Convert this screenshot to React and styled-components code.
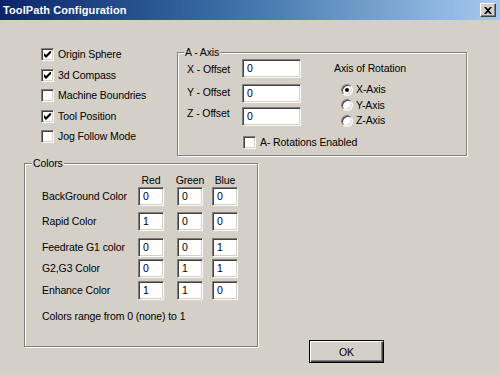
import React from "react";
import styled, { createGlobalStyle } from "styled-components";

const Global = createGlobalStyle`
  html, body { margin: 0; padding: 0; background: #D4D0C8; }
  body { font-family: "Liberation Sans", Arial, sans-serif; font-size: 10.5px; letter-spacing: -0.1px; color: #000; }
  * { box-sizing: border-box; }
`;

const Window = styled.div`
  width: 500px;
  height: 375px;
  background: #D4D0C8;
  display: flex;
  flex-direction: column;
  overflow: hidden;
`;

const TitleBar = styled.div`
  height: 20px;
  flex: none;
  display: flex;
  align-items: center;
  justify-content: space-between;
  padding: 0 4px 0 3px;
  background: linear-gradient(to right, #0A246A 0%, #3A6EA5 45%, #A6CAF0 100%);
`;

const Title = styled.span`
  color: #fff;
  font-weight: bold;
  font-size: 11px;
  letter-spacing: 0.1px;
  line-height: 13px;
`;

const CloseButton = styled.div`
  width: 16px;
  height: 14px;
  background: #D4D0C8;
  border-top: 1px solid #fff;
  border-left: 1px solid #fff;
  border-right: 1px solid #404040;
  border-bottom: 1px solid #404040;
  box-shadow: inset -1px -1px 0 #808080;
  display: flex;
  align-items: center;
  justify-content: center;
`;

const Content = styled.div`
  flex: 1;
  display: flex;
  flex-direction: column;
  padding: 28px 0 0 24px;
`;

const TopRow = styled.div`
  display: flex;
  align-items: flex-start;
`;

const Checklist = styled.div`
  width: 153px;
  padding-left: 17px;
  display: flex;
  flex-direction: column;
`;

const CheckRow = styled.label`
  display: flex;
  align-items: flex-start;
  height: ${(p) => p.$h || 20.5}px;
  gap: 4px;
  line-height: 13px;
  white-space: nowrap;
`;

const Box = styled.span`
  width: 13px;
  height: 13px;
  flex: none;
  background: #fff;
  border-top: 1px solid #808080;
  border-left: 1px solid #808080;
  border-right: 1px solid #fff;
  border-bottom: 1px solid #fff;
  box-shadow: inset 1px 1px 0 #404040, inset -1px -1px 0 #D4D0C8;
  display: flex;
  align-items: center;
  justify-content: center;
`;

const Group = styled.div`
  position: relative;
  width: ${(p) => p.$w}px;
  height: ${(p) => p.$h}px;
  margin-top: ${(p) => p.$mt || 0}px;
  border: 1px solid #808080;
  box-shadow: inset 1px 1px 0 #fff, 1px 1px 0 #fff;
  flex: none;
`;

const Caption = styled.span`
  position: absolute;
  top: -7px;
  left: ${(p) => p.$left}px;
  padding: 0 1px;
  background: #D4D0C8;
  line-height: 13px;
`;

const AxisBody = styled.div`
  display: flex;
  padding: 6px 0 0 9px;
`;

const Fields = styled.div`
  display: flex;
  flex-direction: column;
`;

const Field = styled.div`
  display: flex;
  align-items: center;
  margin-top: ${(p) => p.$mt || 0}px;
`;

const FieldLabel = styled.span`
  width: 55px;
  line-height: 13px;
  white-space: nowrap;
  position: relative;
  top: ${(p) => p.$dy || 0}px;
`;

const TextBox = styled.div`
  width: ${(p) => p.$w}px;
  height: 19px;
  flex: none;
  background: #fff;
  border-top: 1px solid #808080;
  border-left: 1px solid #808080;
  border-right: 1px solid #fff;
  border-bottom: 1px solid #fff;
  box-shadow: inset 1px 1px 0 #404040, inset -1px -1px 0 #D4D0C8;
  padding: 2px 0 0 4px;
  line-height: 13px;
`;

const Rotation = styled.div`
  margin-left: 33px;
  padding-top: 3px;
  display: flex;
  flex-direction: column;
`;

const RotationTitle = styled.div`
  line-height: 13px;
  white-space: nowrap;
  margin-bottom: 7px;
`;

const RadioRow = styled.div`
  display: flex;
  align-items: center;
  gap: 3px;
  padding-left: 7px;
  height: 15.5px;
  line-height: 13px;
`;

const Radio = styled.span`
  position: relative;
  width: 12px;
  height: 12px;
  border-radius: 50%;
  background: #fff;
  border-top: 1px solid #808080;
  border-left: 1px solid #808080;
  border-right: 1px solid #fff;
  border-bottom: 1px solid #fff;
  box-shadow: inset 1px 1px 0 #404040, inset -1px -1px 0 #D4D0C8;
  flex: none;
  &::after {
    content: "";
    display: ${(p) => (p.$on ? "block" : "none")};
    position: absolute;
    left: 3px;
    top: 3px;
    width: 4px;
    height: 4px;
    border-radius: 50%;
    background: #000;
  }
`;

const EnableRow = styled(CheckRow)`
  margin: 7px 0 0 65px;
`;

const BottomRow = styled.div`
  display: flex;
  align-items: flex-end;
  margin-top: 7px;
`;

const ColorsBody = styled.div`
  padding: 10px 0 0 17px;
  display: flex;
  flex-direction: column;
`;

const ColorRow = styled.div`
  display: grid;
  grid-template-columns: 96px 39px 35px 26px;
  align-items: center;
  margin-top: ${(p) => p.$mt || 0}px;
  line-height: 13px;
`;

const Head = styled.div`
  width: 26px;
  display: flex;
  justify-content: center;
  white-space: nowrap;
`;

const RowLabel = styled.span`
  white-space: nowrap;
`;

const Note = styled.div`
  margin-top: 10px;
  line-height: 13px;
`;

const OkButton = styled.button`
  margin: 0 0 -16px 51px;
  width: 75px;
  height: 23px;
  padding: 0;
  font: inherit;
  letter-spacing: inherit;
  color: #000;
  background: #D4D0C8;
  border: 1px solid #000;
  box-shadow: inset 1px 1px 0 #fff, inset -1px -1px 0 #404040, inset -2px -2px 0 #808080;
`;

const Check = () => (
  <svg width="7" height="7" viewBox="0 0 7 7">
    <path d="M0 2 L2 4 L6 0 L7 0 L7 2 L2 7 L0 5 Z" fill="#000" />
  </svg>
);

const CheckBox = ({ on }) => <Box>{on && <Check />}</Box>;

const checks = [
  ["Origin Sphere", true],
  ["3d Compass", true],
  ["Machine Boundries", false],
  ["Tool Position", true],
  ["Jog Follow Mode", false],
];

const colors = [
  ["BackGround Color", ["0", "0", "0"], 0],
  ["Rapid Color", ["1", "0", "0"], 6],
  ["Feedrate G1 color", ["0", "0", "1"], 7],
  ["G2,G3 Color", ["0", "1", "1"], 2],
  ["Enhance Color", ["1", "1", "0"], 3],
];

export default function App() {
  return (
    <>
      <Global />
      <Window>
        <TitleBar>
          <Title>ToolPath Configuration</Title>
          <CloseButton>
            <svg width="8" height="7" viewBox="0 0 8 7">
              <path d="M0 0h2l2 2 2-2h2L5 3.5 8 7H6L4 5 2 7H0l3-3.5z" fill="#000" />
            </svg>
          </CloseButton>
        </TitleBar>
        <Content>
          <TopRow>
            <Checklist>
              {checks.map(([t, on]) => (
                <CheckRow key={t}>
                  <CheckBox on={on} />
                  <span>{t}</span>
                </CheckRow>
              ))}
            </Checklist>
            <Group $w={290} $h={104} $mt={4}>
              <Caption $left={6}>A - Axis</Caption>
              <AxisBody>
                <Fields>
                  <Field>
                    <FieldLabel $dy={1}>X - Offset</FieldLabel>
                    <TextBox $w={59}>0</TextBox>
                  </Field>
                  <Field $mt={6}>
                    <FieldLabel $dy={-1}>Y - Offset</FieldLabel>
                    <TextBox $w={59}>0</TextBox>
                  </Field>
                  <Field $mt={4}>
                    <FieldLabel $dy={-3}>Z - Offset</FieldLabel>
                    <TextBox $w={59}>0</TextBox>
                  </Field>
                </Fields>
                <Rotation>
                  <RotationTitle>Axis of Rotation</RotationTitle>
                  <RadioRow>
                    <Radio $on />
                    <span>X-Axis</span>
                  </RadioRow>
                  <RadioRow>
                    <Radio />
                    <span>Y-Axis</span>
                  </RadioRow>
                  <RadioRow>
                    <Radio />
                    <span>Z-Axis</span>
                  </RadioRow>
                </Rotation>
              </AxisBody>
              <EnableRow $h={13}>
                <CheckBox on={false} />
                <span>A- Rotations Enabled</span>
              </EnableRow>
            </Group>
          </TopRow>
          <BottomRow>
            <Group $w={234} $h={184}>
              <Caption $left={7}>Colors</Caption>
              <ColorsBody>
                <ColorRow>
                  <span />
                  <Head>Red</Head>
                  <Head>Green</Head>
                  <Head>Blue</Head>
                </ColorRow>
                {colors.map(([label, vals, mt]) => (
                  <ColorRow key={label} $mt={mt}>
                    <RowLabel>{label}</RowLabel>
                    {vals.map((v, i) => (
                      <TextBox key={i} $w={26}>
                        {v}
                      </TextBox>
                    ))}
                  </ColorRow>
                ))}
                <Note>Colors range from 0 (none) to 1</Note>
              </ColorsBody>
            </Group>
            <OkButton>OK</OkButton>
          </BottomRow>
        </Content>
      </Window>
    </>
  );
}
